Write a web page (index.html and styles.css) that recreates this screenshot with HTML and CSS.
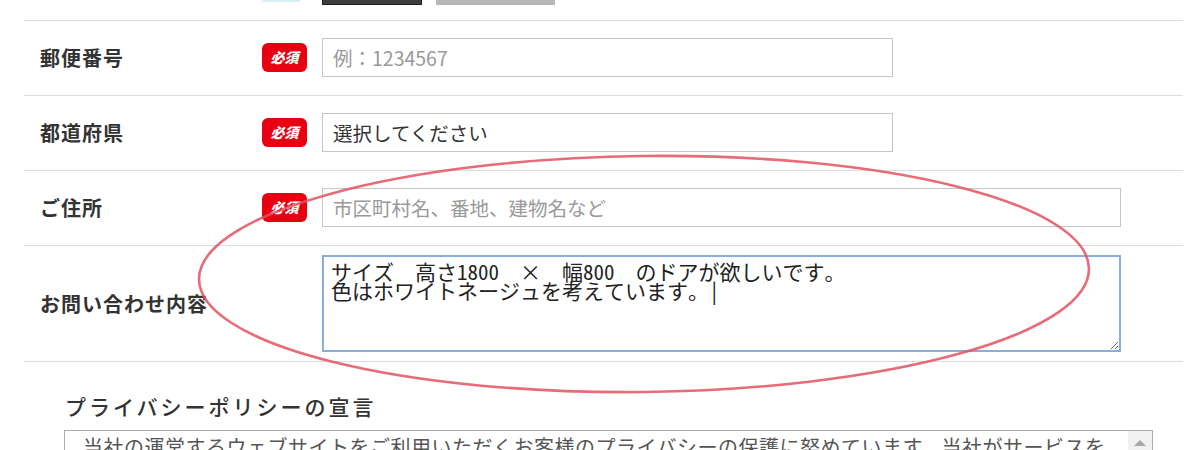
FILE: index.html
```html
<!DOCTYPE html>
<html lang="ja">
<head>
  <meta charset="UTF-8" />
  <meta name="viewport" content="width=device-width, initial-scale=1.0"/>
  <title>お問い合わせ</title>
  <link rel="stylesheet" href="styles.css">
</head>
<body>

  <div class="page">
    <div class="container">

      <div class="prev-row">
        <span class="prev-tag"></span>
        <span class="btn btn-dark"></span>
        <span class="btn btn-gray"></span>
      </div>

      <div class="form-row">
        <div class="label">郵便番号</div>
        <span class="req">必須</span>
        <input class="field w-md" type="text" placeholder="例：1234567">
      </div>

      <div class="form-row">
        <div class="label">都道府県</div>
        <span class="req">必須</span>
        <div class="field select w-md">選択してください</div>
      </div>

      <div class="form-row">
        <div class="label">ご住所</div>
        <span class="req">必須</span>
        <input class="field w-lg" type="text" placeholder="市区町村名、番地、建物名など">
      </div>

      <div class="form-row row-tall">
        <div class="label">お問い合わせ内容</div>
        <span></span>
        <textarea class="message w-lg">サイズ　高さ1800　×　幅800　のドアが欲しいです。
色はホワイトネージュを考えています。|</textarea>
      </div>

      <div class="policy">
        <h2>プライバシーポリシーの宣言</h2>
        <div class="policy-box">
          <div class="policy-text">当社の運営するウェブサイトをご利用いただくお客様のプライバシーの保護に努めています。当社がサービスを提供するにあたり、お客様の個人情報を適切に取り扱います。</div>
          <div class="scrollbar"><span class="arrow-up"></span></div>
        </div>
      </div>

    </div>

    <!-- hand drawn marker circle over the message row -->
    <svg class="marker" width="1200" height="450" viewBox="0 0 1200 450">
      <ellipse cx="644" cy="274" rx="445" ry="118" transform="rotate(-0.7 644 274)"
               fill="none" stroke="#e2525f" stroke-width="2.6" stroke-opacity="0.85"/>
    </svg>
  </div>

</body>
</html>
```

FILE: styles.css
```css
body {
  margin: 0;
  font-family: "Noto Sans CJK JP", "Liberation Sans", sans-serif;
  background: #fff;
  color: #333;
}
.page {
  position: relative;
  height: 450px;
  overflow: hidden;
}
.container {
  margin: 0 17px 0 24px;
}
.prev-row {
  display: flex;
  align-items: flex-start;
  height: 20px;
  overflow: hidden;
  border-bottom: 1px solid #dcdcdc;
  padding-left: 238px;
}
.prev-tag {
  width: 38px;
  height: 2px;
  background: #d6eef4;
}
.btn {
  display: block;
  height: 40px;
  margin-top: -35px;
  box-sizing: border-box;
}
.btn-dark {
  width: 100px;
  margin-left: 22px;
  background: #3d3d3d;
  border: 1px solid #1e1e1e;
}
.btn-gray {
  width: 119px;
  margin-left: 14px;
  background: #b7b7b7;
}
.form-row {
  display: grid;
  grid-template-columns: 207px 45px 1fr;
  column-gap: 15px;
  align-items: center;
  padding: 17px 0 18px 16px;
  border-bottom: 1px solid #dcdcdc;
}
.row-tall {
  padding: 9px 0 9px 16px;
}
.label {
  font-size: 20px;
  font-weight: bold;
  color: #333;
  letter-spacing: 1px;
}
.req {
  display: block;
  width: 45px;
  height: 29px;
  line-height: 29px;
  border-radius: 6px;
  background: #e60012;
  color: #fff;
  font-size: 14px;
  font-weight: 900;
  font-style: italic;
  text-align: center;
}
.field {
  height: 39px;
  box-sizing: border-box;
  border: 1px solid #c4c4c4;
  padding: 0 10px;
  font-family: inherit;
  font-size: 19.5px;
  color: #333;
  background: #fff;
  outline: none;
}
.field::placeholder {
  color: #999;
}
.select {
  display: flex;
  align-items: center;
}
.w-md {
  width: 571px;
}
.w-lg {
  width: 799px;
}
.message {
  display: block;
  height: 97px;
  box-sizing: border-box;
  border: 2px solid #8aaedb;
  padding: 5px 7px;
  font-family: "Noto Sans Mono CJK JP", "Noto Sans CJK JP", monospace;
  font-size: 21px;
  line-height: 19px;
  color: #222;
  background: #fff;
  outline: none;
}
.policy {
  padding-left: 40px;
}
.policy h2 {
  margin: 29px 0 9px 1px;
  font-size: 21px;
  line-height: 30px;
  font-weight: 500;
  letter-spacing: 3px;
  color: #333;
}
.policy-box {
  display: flex;
  width: 1089px;
  height: 100px;
  box-sizing: border-box;
  border: 1px solid #aaa;
}
.policy-text {
  flex: 1;
  padding: 2px 18px 0 18px;
  font-size: 20px;
  line-height: 28px;
  color: #555;
  letter-spacing: 0.5px;
}
.scrollbar {
  width: 24px;
  background: #f1f1f1;
  display: flex;
  justify-content: center;
  padding-top: 9px;
}
.arrow-up {
  width: 0;
  height: 0;
  border-left: 6px solid transparent;
  border-right: 6px solid transparent;
  border-bottom: 6px solid #a8a8a8;
}
.marker {
  position: absolute;
  left: 0;
  top: 0;
  pointer-events: none;
}
```
